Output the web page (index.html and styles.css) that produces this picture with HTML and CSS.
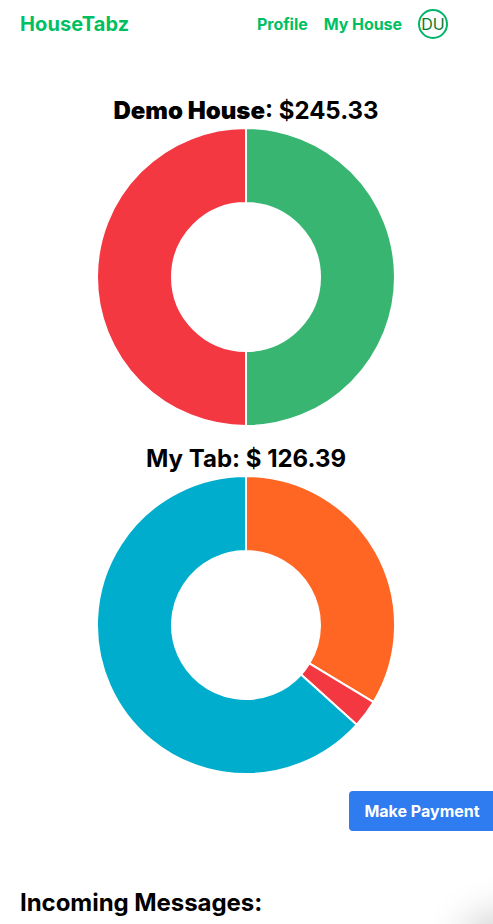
FILE: index.html
```html
<!DOCTYPE html>
<html lang="en">
  <head>
    <meta charset="UTF-8" />
    <title>HouseTabz</title>
    <link rel="stylesheet" href="styles.css">
  </head>
  <body>
    <header class="topbar">
      <a class="logo">HouseTabz</a>
      <nav class="links">
        <a>Profile</a>
        <a>My House</a>
        <span class="avatar">DU</span>
      </nav>
    </header>
    <main>
      <h2 class="chart-title first"><span class="name">Demo House</span>: $245.33</h2>
      <svg class="donut" viewBox="-150 -150 300 300">
        <path fill="#38b571" d="M0 -149 A149 149 0 0 1 0 149 L0 74 A74 74 0 0 0 0 -74 Z" />
        <path fill="#f33842" d="M0 149 A149 149 0 0 1 0 -149 L0 -74 A74 74 0 0 0 0 74 Z" />
      </svg>
      <h2 class="chart-title second">My Tab: $ 126.39</h2>
      <svg class="donut" viewBox="-150 -150 300 300">
        <path fill="#ff6624" d="M0 -149 A149 149 0 0 1 127.5 77.2 L63.3 38.3 A74 74 0 0 0 0 -74 Z" />
        <path fill="#f33842" d="M127.5 77.2 A149 149 0 0 1 110.7 99.7 L55 49.5 A74 74 0 0 0 63.3 38.3 Z" />
        <path fill="#00adcc" d="M110.7 99.7 A149 149 0 1 1 0 -149 L0 -74 A74 74 0 1 0 55 49.5 Z" />
      </svg>
      <div class="actions"><button>Make Payment</button></div>
      <h2 class="messages">Incoming Messages:</h2>
    </main>
    <div class="corner-shadow"></div>
  </body>
</html>
```

FILE: styles.css
```css
html,
body {
  margin: 0;
  padding: 0;
  height: 924px;
  overflow: hidden;
}

body {
  font-family: "Inter", "Liberation Sans", sans-serif;
  color: #000;
  background: white;
}

.topbar {
  display: flex;
  justify-content: space-between;
  align-items: center;
  height: 48px;
  padding: 0 45px 0 20px;
}

.logo {
  font-size: 20px;
  font-weight: 700;
  letter-spacing: 0.1px;
  color: #00bf63;
}

.links {
  display: flex;
  align-items: center;
  gap: 16px;
  font-size: 16px;
  font-weight: 700;
  letter-spacing: -0.05px;
  color: #00bf63;
}

.avatar {
  display: flex;
  align-items: center;
  justify-content: center;
  width: 26px;
  height: 26px;
  border: 2px solid #00b56a;
  border-radius: 50%;
  font-weight: 400;
  color: #0a7a2c;
}

.chart-title {
  margin: 0;
  height: 29px;
  padding-top: 1px;
  line-height: 30px;
  font-size: 24px;
  font-weight: 700;
  text-align: center;
  text-indent: -1px;
}

.chart-title.first {
  margin-top: 47px;
}

.chart-title.second {
  margin-top: 16px;
}

.name {
  font-weight: 900;
}

.donut {
  display: block;
  width: 300px;
  height: 300px;
  margin: 2px auto 0 96px;
}

.donut path {
  stroke: white;
  stroke-width: 2;
}

.actions {
  display: flex;
  justify-content: flex-end;
  margin-top: 16px;
}

.actions button {
  width: 144px;
  height: 40px;
  padding: 0 0 0 2px;
  border: 0;
  border-radius: 4px 0 0 4px;
  background-color: #2f7bf0;
  color: white;
  font-family: inherit;
  font-size: 16px;
  font-weight: 700;
}

.messages {
  margin: 57px 0 0 20px;
  font-size: 24px;
  line-height: 30px;
  font-weight: 700;
  letter-spacing: -0.05px;
}

.corner-shadow {
  position: fixed;
  right: -40px;
  bottom: -40px;
  width: 60px;
  height: 40px;
  border-radius: 50%;
  box-shadow: 0 0 40px 10px rgba(0, 0, 0, 0.2);
}
```
